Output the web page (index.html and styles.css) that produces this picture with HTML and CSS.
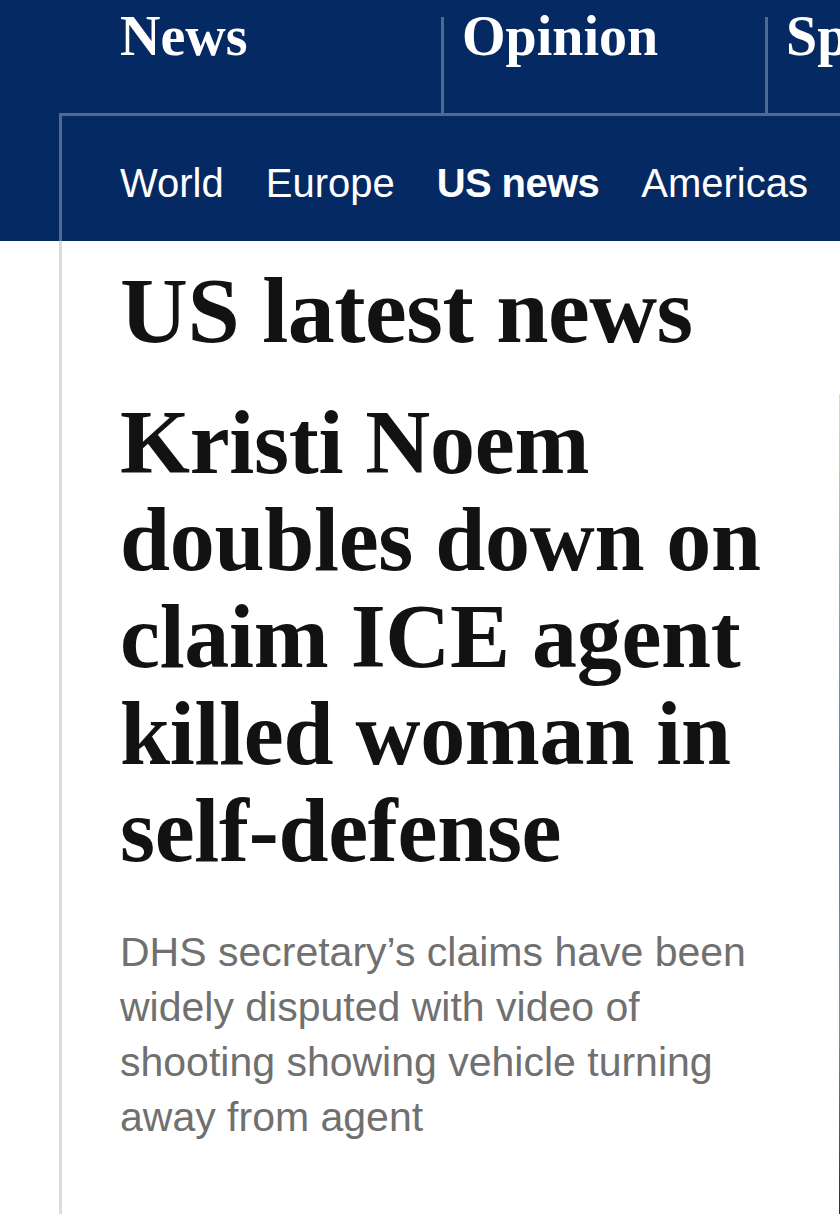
FILE: index.html
```html
<!DOCTYPE html>
<html lang="en">
<head>
<meta charset="utf-8">
<title>US latest news | The Guardian</title>
<link rel="stylesheet" href="styles.css">
</head>
<body>
<header class="masthead">
  <nav class="pillars">
    <a class="pillar pillar--first" href="#">News</a>
    <a class="pillar" href="#">Opinion</a>
    <a class="pillar" href="#">Sport</a>
  </nav>
  <div class="frame">
    <nav class="subnav">
      <a href="#">World</a>
      <a href="#">Europe</a>
      <a class="current" href="#">US news</a>
      <a href="#">Americas</a>
    </nav>
  </div>
</header>
<main class="page">
  <h1 class="series">US latest news</h1>
  <div class="lead">
    <div class="lead-text">
      <h2 class="headline">Kristi Noem doubles down on claim ICE agent killed woman in self-defense</h2>
      <p class="standfirst">DHS secretary’s claims have been widely disputed with video of shooting showing vehicle turning away from agent</p>
    </div>
    <div class="lead-media"></div>
  </div>
</main>
</body>
</html>
```

FILE: styles.css
```css
html, body {
  margin: 0;
  padding: 0;
  overflow-x: hidden;
}

body {
  background: #ffffff;
  font-family: "Liberation Sans", Arial, sans-serif;
  color: #121212;
}

.masthead {
  background: #052962;
  height: 241px;
  overflow: hidden;
}

.pillars {
  display: flex;
  height: 113px;
  padding-left: 120px;
  white-space: nowrap;
}

.pillar {
  flex: none;
  box-sizing: border-box;
  margin-top: 17px;
  height: 96px;
  font-family: "Liberation Serif", "Times New Roman", serif;
  font-weight: 700;
  font-size: 56px;
  line-height: 38px;
  color: #ffffff;
  text-decoration: none;
}

.pillar--first {
  width: 321px;
}

.pillar + .pillar {
  width: 324px;
  border-left: 3px solid #506991;
  padding-left: 18px;
}

.frame {
  margin-left: 59px;
  border-left: 3px solid #506991;
  border-top: 3px solid #506991;
  height: 125px;
}

.subnav {
  display: flex;
  gap: 42px;
  padding: 43px 0 0 58px;
  white-space: nowrap;
  font-size: 40px;
  line-height: 48px;
}

.subnav a {
  flex: none;
  color: #ffffff;
  text-decoration: none;
}

.subnav .current {
  font-weight: 700;
  letter-spacing: -0.6px;
}

.page {
  box-sizing: border-box;
  min-height: 973px;
  margin-left: 59px;
  border-left: 3px solid #dcdcdc;
  padding: 22px 0 0 58px;
}

.series {
  margin: 0;
  font-family: "Liberation Serif", "Times New Roman", serif;
  font-weight: 700;
  font-size: 94px;
  line-height: 94px;
  letter-spacing: -0.5px;
  color: #121212;
}

.lead {
  display: flex;
  gap: 28px;
  margin-top: 37px;
}

.lead-text {
  flex: none;
  width: 691px;
}

.headline {
  margin: 0;
  font-family: "Liberation Serif", "Times New Roman", serif;
  font-weight: 700;
  font-size: 90px;
  line-height: 97px;
  letter-spacing: -0.3px;
  color: #121212;
}

.standfirst {
  margin: 46px 0 0;
  max-width: 650px;
  font-size: 41px;
  line-height: 55px;
  color: #707070;
}

.lead-media {
  flex: none;
  width: 420px;
  height: 900px;
  background: linear-gradient(180deg, #d9ddd0 0%, #9aa6a8 20%, #64788c 45%, #8a8f90 70%, #3a3a3a 88%, #151515 100%);
}
```
